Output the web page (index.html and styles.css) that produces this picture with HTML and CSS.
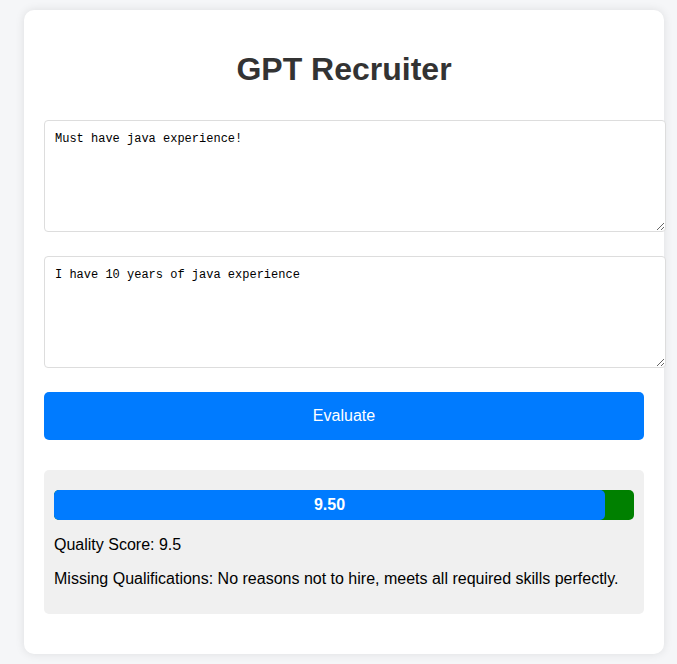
FILE: index.html
```html
<!DOCTYPE html>
<html>
<head>
<meta charset="utf-8">
<link rel="stylesheet" href="styles.css">
</head>
<body>
<div class="card">
  <h1 class="title">GPT Recruiter</h1>
  <textarea class="field">Must have java experience!</textarea>
  <textarea class="field">I have 10 years of java experience</textarea>
  <button class="evaluate">Evaluate</button>
  <div class="results">
    <div class="bar"><div class="fill" style="width: 95%">9.50</div></div>
    <p class="line">Quality Score: 9.5</p>
    <p class="line">Missing Qualifications: No reasons not to hire, meets all required skills perfectly.</p>
  </div>
</div>
</body>
</html>
```
FILE: styles.css
```css
html, body {
  margin: 0;
  background: #f5f6f8;
  font-family: "Liberation Sans", Arial, sans-serif;
}
body {
  padding: 10px 13px 10px 24px;
}
.card {
  width: 640px;
  box-sizing: border-box;
  background: #fff;
  border-radius: 10px;
  box-shadow: 0 0 10px rgba(0, 0, 0, 0.1);
  padding: 20px 20px 20px 20px;
}
.title {
  margin: 21px 0 32px;
  font-size: 32px;
  line-height: 37px;
  font-weight: bold;
  text-align: center;
  color: #333;
}
.field {
  display: block;
  width: 100%;
  height: 90px;
  padding: 10px;
  margin: 0 0 24px;
  border: 1px solid #ddd;
  border-radius: 4px;
  font-family: "Liberation Mono", "DejaVu Sans Mono", monospace;
  font-size: 12px;
  line-height: 16px;
  color: #000;
  background: #fff;
}
.evaluate {
  display: block;
  width: 100%;
  height: 48px;
  border: none;
  border-radius: 5px;
  background: #007bff;
  color: #fff;
  font-family: "Liberation Sans", Arial, sans-serif;
  font-size: 16px;
  margin: 0 0 30px;
}
.results {
  background: #f0f0f0;
  border-radius: 5px;
  padding: 20px 10px 10px;
  margin-bottom: 20px;
}
.bar {
  height: 30px;
  background: #008000;
  border-radius: 5px;
  display: flex;
}
.fill {
  height: 30px;
  background: #007bff;
  border-radius: 5px;
  color: #fff;
  font-weight: bold;
  font-size: 16px;
  line-height: 30px;
  text-align: center;
}
.line {
  margin: 16px 0;
  font-size: 16px;
  line-height: 18px;
  color: #000;
}
```
